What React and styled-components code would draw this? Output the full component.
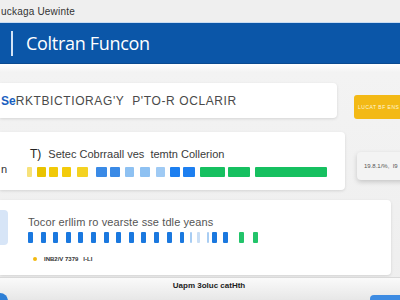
import styled, { createGlobalStyle } from "styled-components";

const Global = createGlobalStyle`
  html, body { margin: 0; padding: 0; }
  body {
    width: 400px;
    height: 300px;
    overflow: hidden;
    background: #f0f0f0;
    font-family: "Liberation Sans", Arial, sans-serif;
  }
`;

const Page = styled.div`
  width: 400px;
  height: 300px;
  display: flex;
  flex-direction: column;
  overflow: hidden;
`;

const TopBar = styled.div`
  height: 22px;
  flex: none;
  background: #efefef;
  display: flex;
  align-items: center;
  padding-left: 1px;
  font-size: 10px;
  color: #333;
  letter-spacing: 0.2px;
`;

const Header = styled.div`
  height: 42px;
  flex: none;
  background: #0b56a8;
  border-top: 1px solid #c9dcf2;
  border-bottom: 1px solid #0a4a90;
  box-sizing: border-box;
  display: flex;
  align-items: center;
  padding-left: 11px;
`;

const Divider = styled.div`
  width: 2px;
  height: 25px;
  background: #d3e3f5;
`;

const Title = styled.h1`
  margin: 0 0 0 13px;
  font-family: "Open Sans", sans-serif;
  font-weight: 400;
  font-size: 18px;
  color: #fff;
  letter-spacing: -0.3px;
`;

const Main = styled.div`
  flex: 1;
  background: linear-gradient(#ffffff 0px, #f3f3f3 8px, #eeeeee 100%);
  padding-top: 19px;
  display: flex;
  flex-direction: column;
`;

const Row = styled.div`
  display: flex;
  align-items: ${(p) => p.$align || "flex-start"};
  margin-top: ${(p) => p.$mt || 0}px;
`;

const Card = styled.div`
  width: ${(p) => p.$w}px;
  height: ${(p) => p.$h}px;
  background: #fff;
  border-radius: 0 4px 4px 0;
  box-shadow: 0 1px 3px rgba(0, 0, 0, 0.12);
  box-sizing: border-box;
  flex: none;
`;

const SearchCard = styled(Card)`
  display: flex;
  align-items: center;
  padding-left: 1px;
  font-size: 12px;
  color: #4a4a4a;
  letter-spacing: 0.6px;
  white-space: nowrap;
  overflow: hidden;
`;

const Blue = styled.span`
  color: #1a5fc0;
  font-weight: 700;
  letter-spacing: 0;
`;

const YellowButton = styled.button`
  margin-left: 17px;
  width: 50px;
  height: 24px;
  border: none;
  border-radius: 3px 0 0 3px;
  background: #f3b915;
  color: #fff7d8;
  font-size: 5px;
  letter-spacing: 0.5px;
  padding: 0 0 0 4px;
  text-align: left;
  flex: none;
  margin-bottom: -1px;
`;

const ColorCard = styled(Card)`
  display: flex;
  padding-top: 15px;
`;

const SideLabel = styled.div`
  width: 27px;
  flex: none;
  font-size: 11px;
  color: #333;
  padding-top: 16px;
  padding-left: 1px;
  box-sizing: border-box;
`;

const Body = styled.div`
  display: flex;
  flex-direction: column;
`;

const CardTitle = styled.div`
  font-size: 11px;
  color: #3a3a3a;
  height: 14px;
  line-height: 14px;
  white-space: nowrap;
`;

const Ty = styled.span`
  font-size: 12px;
  color: #222;
  margin-left: 3px;
  margin-right: 7px;
`;

const Swatches = styled.div`
  display: flex;
  margin-top: ${(p) => p.$mt}px;
  height: ${(p) => p.$h}px;
`;

const Swatch = styled.div`
  width: ${(p) => p.$w}px;
  margin-left: ${(p) => p.$ml}px;
  background: ${(p) => p.$c};
  border-radius: 1px;
  flex: none;
`;

const Pill = styled.div`
  margin-left: 12px;
  margin-top: 20px;
  width: 50px;
  height: 28px;
  background: #f3f3f3;
  border-radius: 4px 0 0 4px;
  box-shadow: 0 2px 5px rgba(0, 0, 0, 0.18);
  font-size: 6px;
  color: #555;
  display: flex;
  align-items: center;
  padding-left: 7px;
  box-sizing: border-box;
  white-space: nowrap;
  flex: none;
`;

const YearCard = styled(Card)`
  display: flex;
  padding-top: 10px;
`;

const Tab = styled.div`
  width: 8px;
  height: 35px;
  background: #d7e5f7;
  border-radius: 0 4px 4px 0;
  flex: none;
`;

const YearBody = styled.div`
  margin-left: 20px;
  display: flex;
  flex-direction: column;
  padding-top: 5px;
`;

const YearText = styled.div`
  font-size: 11px;
  color: #555;
  letter-spacing: 0.1px;
  height: 14px;
  line-height: 14px;
  white-space: nowrap;
`;

const Legend = styled.div`
  display: flex;
  align-items: center;
  margin-top: 13px;
  margin-left: 5px;
  font-size: 6px;
  font-weight: 700;
  color: #333;
  gap: 7px;
`;

const Dot = styled.span`
  width: 4px;
  height: 4px;
  border-radius: 50%;
  background: #f2b90f;
`;

const Footer = styled.div`
  height: 23px;
  flex: none;
  margin-top: 2px;
  background: linear-gradient(#fafafa, #e6e6e6);
  border-top: 1px solid #d9d9d9;
  display: flex;
  justify-content: space-between;
  align-items: flex-start;
  overflow: hidden;
`;

const Round = styled.div`
  width: 16px;
  height: 16px;
  border-radius: 50%;
  background: #2d7fd6;
  margin: 15px 0 0 -8px;
`;

const FooterText = styled.div`
  font-size: 8px;
  font-weight: 700;
  color: #222;
  margin-top: 3px;
  margin-left: 40px;
`;

const FooterBtn = styled.div`
  width: 30px;
  height: 12px;
  border-radius: 4px 0 0 0;
  background: #3d8be2;
  margin-top: 17px;
`;

const colorSwatches = [
  { c: "#f7e27a", w: 5, ml: 0 },
  { c: "#e9c300", w: 9, ml: 5 },
  { c: "#f1c908", w: 9, ml: 3 },
  { c: "#f3cb0b", w: 9, ml: 4 },
  { c: "#f4d222", w: 11, ml: 6 },
  { c: "#3a8ae6", w: 11, ml: 8 },
  { c: "#3a8ae6", w: 10, ml: 3 },
  { c: "#8ec1f2", w: 9, ml: 5 },
  { c: "#8ec1f2", w: 10, ml: 6 },
  { c: "#9fcaf4", w: 9, ml: 6 },
  { c: "#1d7ff0", w: 10, ml: 5 },
  { c: "#1d7ff0", w: 12, ml: 3 },
  { c: "#16c060", w: 25, ml: 5 },
  { c: "#16c060", w: 22, ml: 3 },
  { c: "#16c060", w: 72, ml: 5 },
];

const yearSwatches = [
  ...Array.from({ length: 12 }, (_, i) => ({ c: "#1a78df", w: 5, ml: i === 0 ? 0 : 7.6 })),
  { c: "#1a78df", w: 4, ml: 8 },
  { c: "#a8cdf3", w: 2, ml: 6 },
  { c: "#c9def5", w: 3, ml: 5 },
  { c: "#a8cdf3", w: 2, ml: 7 },
  { c: "#1a78df", w: 5, ml: 3 },
  { c: "#1a78df", w: 5, ml: 6 },
  { c: "#22c46a", w: 5, ml: 11 },
  { c: "#22c46a", w: 5, ml: 9 },
];

function App() {
  return (
    <Page>
      <Global />
      <TopBar>uckaga Uewinte</TopBar>
      <Header>
        <Divider />
        <Title>Coltran Funcon</Title>
      </Header>
      <Main>
        <Row $align="flex-end">
          <SearchCard $w={337} $h={35}>
            <Blue>Se</Blue>RKTBICTIORAG'Y&nbsp;&nbsp;P'TO-R OCLARIR
          </SearchCard>
          <YellowButton>LUCAT BF ENS</YellowButton>
        </Row>
        <Row $mt={14}>
          <ColorCard $w={345} $h={58}>
            <SideLabel>n</SideLabel>
            <Body>
              <CardTitle>
                <Ty>T)</Ty>Setec Cobrraall ves&nbsp; temtn Collerion
              </CardTitle>
              <Swatches $mt={6} $h={10}>
                {colorSwatches.map((s, i) => (
                  <Swatch key={i} $c={s.c} $w={s.w} $ml={s.ml} />
                ))}
              </Swatches>
            </Body>
          </ColorCard>
          <Pill>19.8.1/%,&nbsp; I9</Pill>
        </Row>
        <Row $mt={10}>
          <YearCard $w={391} $h={75}>
            <Tab />
            <YearBody>
              <YearText>Tocor erllim ro vearste sse tdle yeans</YearText>
              <Swatches $mt={3} $h={11}>
                {yearSwatches.map((s, i) => (
                  <Swatch key={i} $c={s.c} $w={s.w} $ml={s.ml} />
                ))}
              </Swatches>
              <Legend>
                <Dot />
                <span>INB2/V 7379&nbsp;&nbsp; I-LI</span>
              </Legend>
            </YearBody>
          </YearCard>
        </Row>
        <Footer>
          <Round />
          <FooterText>Uapm 3oluc catHth</FooterText>
          <FooterBtn />
        </Footer>
      </Main>
    </Page>
  );
}

export default App;
